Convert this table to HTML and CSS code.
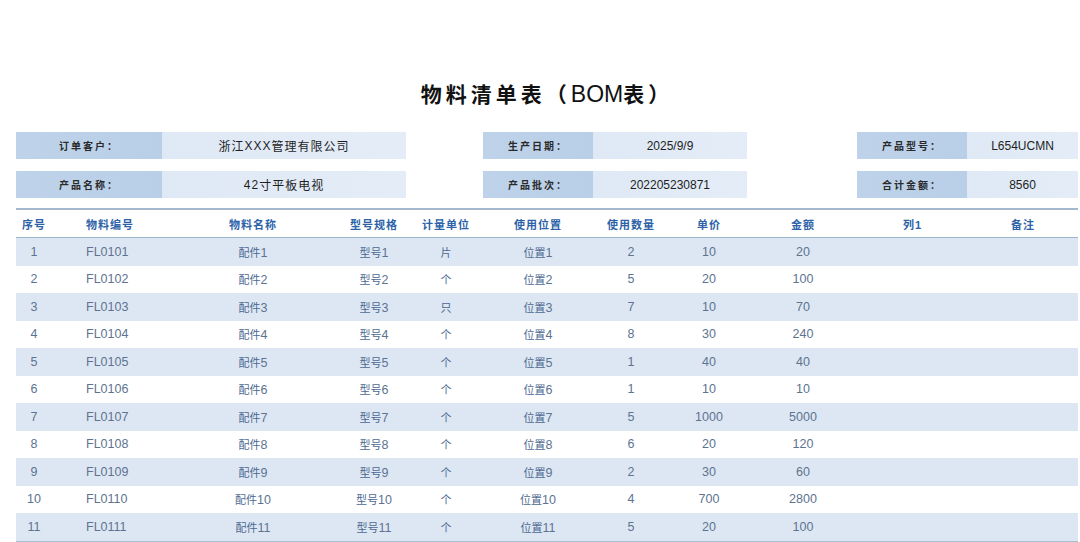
FILE: index.html
```html
<!DOCTYPE html>
<html lang="zh-CN">
<head>
<meta charset="utf-8">
<title>物料清单表（BOM表）</title>
<link rel="stylesheet" href="styles.css">
</head>
<body>
<div class="page">
  <h1 class="title">物料清单表（<span class="latin">BOM</span>表）</h1>

  <div class="info">
    <div class="info-row">
      <div class="group g1"><div class="label">订单客户：</div><div class="value">浙江<span class="latin">XXX</span>管理有限公司</div></div>
      <div class="group g2"><div class="label">生产日期：</div><div class="value latin">2025/9/9</div></div>
      <div class="group g3"><div class="label">产品型号：</div><div class="value latin">L654UCMN</div></div>
    </div>
    <div class="info-row">
      <div class="group g1"><div class="label">产品名称：</div><div class="value"><span class="latin">42</span>寸平板电视</div></div>
      <div class="group g2"><div class="label">产品批次：</div><div class="value latin">202205230871</div></div>
      <div class="group g3"><div class="label">合计金额：</div><div class="value latin">8560</div></div>
    </div>
  </div>

  <table class="bom">
    <colgroup>
      <col class="c1"><col class="c2"><col class="c3"><col class="c4"><col class="c5"><col class="c6"><col class="c7"><col class="c8"><col class="c9"><col class="c10"><col class="c11">
    </colgroup>
    <thead>
      <tr>
        <th>序号</th><th class="left">物料编号</th><th class="name">物料名称</th><th>型号规格</th><th>计量单位</th><th>使用位置</th><th>使用数量</th><th>单价</th><th>金额</th><th>列<span class="latin">1</span></th><th class="note">备注</th>
      </tr>
    </thead>
    <tbody>
      <tr><td class="num">1</td><td class="left num">FL0101</td><td class="name">配件<span class="latin">1</span></td><td>型号<span class="latin">1</span></td><td>片</td><td>位置<span class="latin">1</span></td><td class="num">2</td><td class="num">10</td><td class="num">20</td><td></td><td class="note"></td></tr>
      <tr><td class="num">2</td><td class="left num">FL0102</td><td class="name">配件<span class="latin">2</span></td><td>型号<span class="latin">2</span></td><td>个</td><td>位置<span class="latin">2</span></td><td class="num">5</td><td class="num">20</td><td class="num">100</td><td></td><td class="note"></td></tr>
      <tr><td class="num">3</td><td class="left num">FL0103</td><td class="name">配件<span class="latin">3</span></td><td>型号<span class="latin">3</span></td><td>只</td><td>位置<span class="latin">3</span></td><td class="num">7</td><td class="num">10</td><td class="num">70</td><td></td><td class="note"></td></tr>
      <tr><td class="num">4</td><td class="left num">FL0104</td><td class="name">配件<span class="latin">4</span></td><td>型号<span class="latin">4</span></td><td>个</td><td>位置<span class="latin">4</span></td><td class="num">8</td><td class="num">30</td><td class="num">240</td><td></td><td class="note"></td></tr>
      <tr><td class="num">5</td><td class="left num">FL0105</td><td class="name">配件<span class="latin">5</span></td><td>型号<span class="latin">5</span></td><td>个</td><td>位置<span class="latin">5</span></td><td class="num">1</td><td class="num">40</td><td class="num">40</td><td></td><td class="note"></td></tr>
      <tr><td class="num">6</td><td class="left num">FL0106</td><td class="name">配件<span class="latin">6</span></td><td>型号<span class="latin">6</span></td><td>个</td><td>位置<span class="latin">6</span></td><td class="num">1</td><td class="num">10</td><td class="num">10</td><td></td><td class="note"></td></tr>
      <tr><td class="num">7</td><td class="left num">FL0107</td><td class="name">配件<span class="latin">7</span></td><td>型号<span class="latin">7</span></td><td>个</td><td>位置<span class="latin">7</span></td><td class="num">5</td><td class="num">1000</td><td class="num">5000</td><td></td><td class="note"></td></tr>
      <tr><td class="num">8</td><td class="left num">FL0108</td><td class="name">配件<span class="latin">8</span></td><td>型号<span class="latin">8</span></td><td>个</td><td>位置<span class="latin">8</span></td><td class="num">6</td><td class="num">20</td><td class="num">120</td><td></td><td class="note"></td></tr>
      <tr><td class="num">9</td><td class="left num">FL0109</td><td class="name">配件<span class="latin">9</span></td><td>型号<span class="latin">9</span></td><td>个</td><td>位置<span class="latin">9</span></td><td class="num">2</td><td class="num">30</td><td class="num">60</td><td></td><td class="note"></td></tr>
      <tr><td class="num">10</td><td class="left num">FL0110</td><td class="name">配件<span class="latin">10</span></td><td>型号<span class="latin">10</span></td><td>个</td><td>位置<span class="latin">10</span></td><td class="num">4</td><td class="num">700</td><td class="num">2800</td><td></td><td class="note"></td></tr>
      <tr><td class="num">11</td><td class="left num">FL0111</td><td class="name">配件<span class="latin">11</span></td><td>型号<span class="latin">11</span></td><td>个</td><td>位置<span class="latin">11</span></td><td class="num">5</td><td class="num">20</td><td class="num">100</td><td></td><td class="note"></td></tr>
    </tbody>
  </table>
</div>
</body>
</html>
```

FILE: styles.css
```css
html, body {
  margin: 0;
  padding: 0;
  background: #ffffff;
}

body {
  font-family: "Noto Sans CJK SC", "Noto Sans", sans-serif;
  color: #222;
  overflow: hidden;
}

.latin {
  font-family: "Liberation Sans", Arial, sans-serif;
}

.page {
  width: 1080px;
  height: 542px;
  padding: 0 2px 0 16px;
  box-sizing: border-box;
}

.title {
  margin: 0;
  padding-top: 76px;
  height: 34px;
  line-height: 34px;
  font-size: 21px;
  font-weight: 700;
  letter-spacing: 4px;
  text-align: center;
  color: #111;
  padding-left: 0;
}

.title .latin {
  font-weight: 400;
  font-size: 23px;
  letter-spacing: 0;
}

.info {
  margin-top: 22px;
  display: flex;
  flex-direction: column;
  gap: 12px;
}

.info-row {
  display: flex;
  height: 27px;
}

.group {
  display: flex;
  height: 27px;
}

.g1 { width: 390px; }
.g2 { width: 264px; margin-left: 77px; }
.g3 { width: 221px; margin-left: 110px; }

.label {
  display: flex;
  align-items: center;
  justify-content: center;
  background: linear-gradient(90deg, #bed3ea 0%, #b9cfe7 100%);
  font-size: 10px;
  font-weight: 700;
  letter-spacing: 2px;
  color: #2a2a2a;
}

.g1 .label { width: 146px; }
.g2 .label { width: 110px; }
.g3 .label { width: 110px; }

.value {
  flex: 1;
  display: flex;
  align-items: center;
  justify-content: center;
  background: linear-gradient(90deg, #dfe9f5 0%, #e3ecf7 100%);
  font-size: 12px;
  color: #1e1e1e;
}

.g1 .value {
  letter-spacing: 1px;
}

.bom {
  margin-top: 10px;
  width: 1062px;
  border-collapse: collapse;
  table-layout: fixed;
  border-top: 2px solid #a3b8cd;
  border-bottom: 2px solid #a9bed4;
}

.c1 { width: 36px; }
.c2 { width: 138px; }
.c3 { width: 140px; }
.c4 { width: 88px; }
.c5 { width: 56px; }
.c6 { width: 128px; }
.c7 { width: 58px; }
.c8 { width: 98px; }
.c9 { width: 90px; }
.c10 { width: 128px; }
.c11 { width: 102px; }

.bom th,
.bom td {
  padding: 0;
  text-align: center;
  white-space: nowrap;
  overflow: visible;
}

.bom th {
  height: 27px;
  font-size: 11px;
  font-weight: 700;
  letter-spacing: 1px;
  color: #2d62a8;
  border-bottom: 1px solid #9fb5cc;
}

.bom th .latin {
  font-weight: 700;
  letter-spacing: 0;
}

.bom td {
  height: 27.5px;
  font-size: 11px;
  color: #4c6891;
}

.bom td .latin,
.bom td.num {
  font-family: "Liberation Sans", Arial, sans-serif;
  font-size: 12.5px;
  color: #5d7390;
}

.bom tbody tr:nth-child(odd) {
  background: #dde7f3;
}

.bom tbody tr:nth-child(even) {
  background: #ffffff;
}

.bom .left {
  text-align: left;
  padding-left: 34px;
}

.bom .name {
  padding-right: 14px;
}

.bom .note {
  padding-right: 8px;
}
```
